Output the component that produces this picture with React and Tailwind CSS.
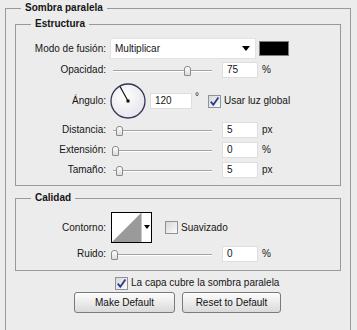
const Check = ({ checked }) => (
  <span className="flex h-[13px] w-[13px] shrink-0 items-center justify-center border border-[#8e919e] bg-linear-to-br from-[#d8d8d8] to-[#fbfbfb]">
    {checked && (
      <svg width="11" height="11" viewBox="0 0 11 11">
        <path d="M1.8 5.6 L4.3 8.8 L9.4 1.6" fill="none" stroke="#2c3a8e" strokeWidth="1.8" />
      </svg>
    )}
  </span>
);

const Label = ({ children }) => (
  <span className="w-[90px] shrink-0 text-right">{children}</span>
);

const Slider = ({ thumb }) => (
  <div className="relative ml-[4px] h-[16px] w-[106px] shrink-0">
    <div className="absolute left-[3px] right-[4px] top-[8px] h-[2px] border-t border-[#a4a4a4] bg-white" />
    <div className={`absolute top-[4px] h-[10px] w-[7px] rounded-t-[3px] rounded-b-[1px] border border-[#8a8a8a] bg-linear-to-b from-white to-[#dcdcdc] ${thumb}`} />
  </div>
);

const Field = ({ value, className = "ml-[6px] w-[36px]" }) => (
  <div className={`flex h-[16px] shrink-0 items-center border border-[#dedede] bg-white pl-[4px] ${className}`}>
    {value}
  </div>
);

const SliderRow = ({ label, thumb, value, unit, className }) => (
  <div className={`flex h-[16px] items-center ${className}`}>
    <Label>{label}</Label>
    <Slider thumb={thumb} />
    <Field value={value} />
    <span className="ml-[4px]">{unit}</span>
  </div>
);

const Dial = () => (
  <svg width="36" height="36" viewBox="0 0 36 36" className="ml-[4px] shrink-0">
    <defs>
      <radialGradient id="dialFill" cx="40%" cy="35%" r="70%">
        <stop offset="0%" stopColor="#ffffff" />
        <stop offset="100%" stopColor="#e4e4ea" />
      </radialGradient>
    </defs>
    <circle cx="18" cy="18" r="17" fill="url(#dialFill)" stroke="#2f3557" strokeWidth="1.3" />
    <line x1="18" y1="18" x2="10" y2="3.5" stroke="#111" strokeWidth="1.2" />
    <rect x="16.5" y="16.5" width="3" height="3" fill="#111" />
  </svg>
);

const Contour = () => (
  <div className="ml-[5px] flex h-[31px] w-[41px] shrink-0 border border-black bg-white">
    <svg width="29" height="29" viewBox="0 0 29 29" className="shrink-0">
      <polygon points="0,29 29,0 29,29" fill="#9a9a9a" />
    </svg>
    <div className="flex flex-1 items-start justify-center border-l border-[#c8c8c8] pt-[12px]">
      <svg width="6" height="4" viewBox="0 0 6 4">
        <polygon points="0,0 6,0 3,4" fill="#000" />
      </svg>
    </div>
  </div>
);

const Button = ({ children, className }) => (
  <button className={`flex h-[21px] items-center justify-center rounded-[3px] border border-[#7a7a7a] bg-linear-to-b from-[#fdfdfd] to-[#dadada] text-[10px] text-[#111] ${className}`}>
    {children}
  </button>
);

export default function App() {
  return (
    <div className="h-[330px] w-[357px] overflow-hidden bg-[#ececec] font-['Liberation_Sans',Arial,sans-serif] text-[10px] leading-[12px] text-[#151515]">
      <fieldset className="ml-[5px] mt-[1px] h-[345px] w-[346px] border border-[#999999] px-[9px] pt-[2px]">
        <legend className="ml-[6px] px-[4px] text-[10px] font-bold leading-[14px]">Sombra paralela</legend>

        <fieldset className="w-[326px] border border-[#999999] pb-[7px] pt-[7px]">
          <legend className="ml-[15px] px-[4px] text-[10px] font-bold leading-[14px]">Estructura</legend>

          <div className="flex h-[21px] items-center">
            <Label>Modo de fusión:</Label>
            <div className="ml-[4px] flex h-[21px] w-[146px] shrink-0 items-center justify-between border border-[#e2e2e2] bg-white pl-[4px] pr-[5px]">
              <span>Multiplicar</span>
              <svg width="8" height="5" viewBox="0 0 8 5">
                <polygon points="0,0 8,0 4,5" fill="#000" />
              </svg>
            </div>
            <div className="ml-[3px] h-[15px] w-[30px] shrink-0 border border-[#7d7d7d] bg-black" />
          </div>

          <SliderRow label="Opacidad:" thumb="left-[74px]" value="75" unit="%" className="mt-[3px]" />

          <div className="mt-[5px] flex h-[36px] items-center">
            <Label>Ángulo:</Label>
            <Dial />
            <Field value="120" className="ml-[4px] w-[42px]" />
            <span className="ml-[3px] self-start pt-[8px]">°</span>
            <div className="ml-[9px] flex items-center gap-[3px]">
              <Check checked />
              <span>Usar luz global</span>
            </div>
          </div>

          <SliderRow label="Distancia:" thumb="left-[6px]" value="5" unit="px" className="mt-[3px]" />
          <SliderRow label="Extensión:" thumb="left-[2px]" value="0" unit="%" className="mt-[4px]" />
          <SliderRow label="Tamaño:" thumb="left-[6px]" value="5" unit="px" className="mt-[4px]" />
        </fieldset>

        <fieldset className="mt-[5px] w-[326px] border border-[#999999] pb-[8px] pt-[7px]">
          <legend className="ml-[15px] px-[4px] text-[10px] font-bold leading-[14px]">Calidad</legend>

          <div className="flex h-[31px] items-center">
            <Label>Contorno:</Label>
            <Contour />
            <div className="ml-[13px] flex items-center gap-[3px]">
              <Check />
              <span>Suavizado</span>
            </div>
          </div>

          <SliderRow label="Ruido:" thumb="left-[1px]" value="0" unit="%" className="mt-[3px]" />
        </fieldset>

        <div className="ml-[100px] mt-[5px] flex h-[14px] items-center gap-[3px]">
          <Check checked />
          <span>La capa cubre la sombra paralela</span>
        </div>

        <div className="ml-[59px] mt-[2px] flex gap-[7px]">
          <Button className="w-[101px]">Make Default</Button>
          <Button className="w-[99px]">Reset to Default</Button>
        </div>
      </fieldset>
    </div>
  );
}
